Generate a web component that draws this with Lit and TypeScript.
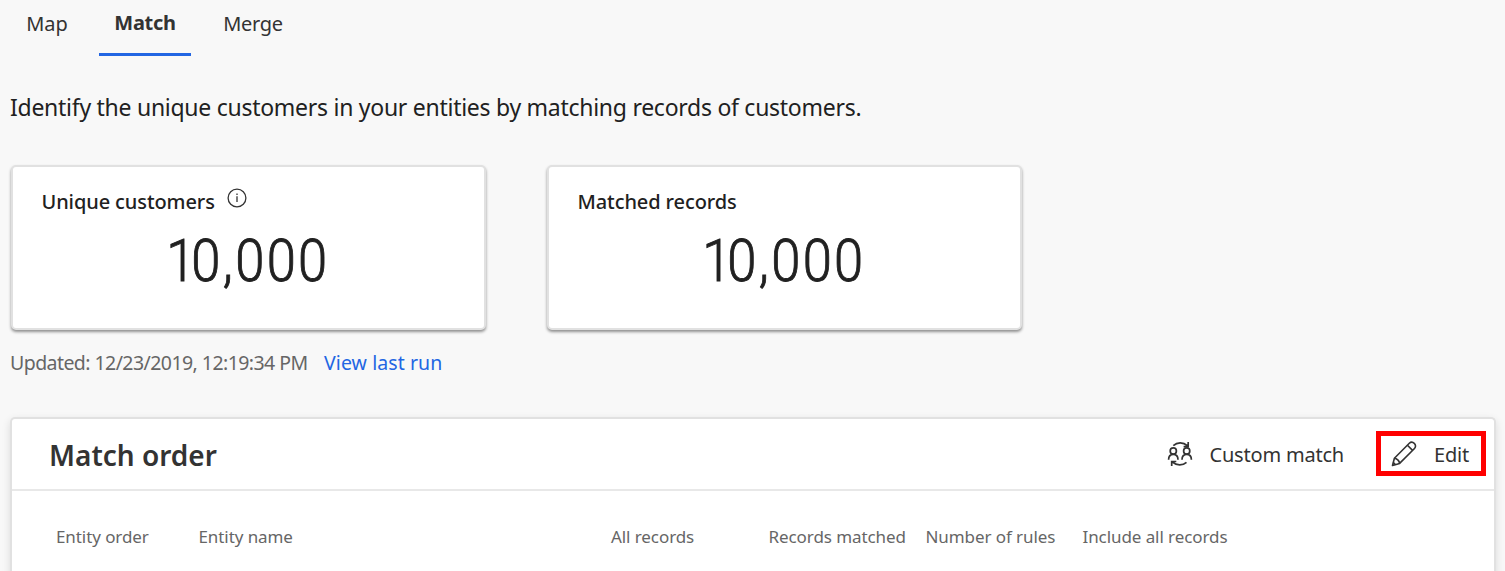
import { LitElement, html, css, svg } from "lit";
import { customElement, property } from "lit/decorators.js";

const infoIcon = svg`<svg class="info" width="20" height="20" viewBox="0 0 20 20" fill="none" stroke="#333" stroke-width="1.3">
  <circle cx="10" cy="10" r="8.9"></circle>
  <path d="M10 8.3V14M10 5.6V7"></path>
</svg>`;

const customMatchIcon = svg`<svg width="26" height="26" viewBox="0 0 26 26" fill="none" stroke="#333" stroke-width="1.7">
  <circle cx="6.3" cy="9.9" r="3.1"></circle>
  <circle cx="19.7" cy="9.9" r="3.1"></circle>
  <path d="M1.6 18.8C1.6 15.4 3.5 13.3 6.3 13.3S11 15.4 11 18.8M15 18.8C15 15.4 16.9 13.3 19.7 13.3S24.4 15.4 24.4 18.8"></path>
  <path d="M6.3 4.6C10.3 0.9 16.2 1 20.4 4.7M21.2 1V5.6H16.6"></path>
  <path d="M19.5 21.4C15.7 24.8 9.6 24.8 5.4 21.2M4.7 25V20.5H9.3"></path>
</svg>`;

const editIcon = svg`<svg width="26" height="26" viewBox="0 0 26 26" fill="none" stroke="#333" stroke-width="1.6" stroke-linejoin="round">
  <path d="M1.5 24.5L3.4 17.2L18.3 2.3C19.7 0.9 21.8 0.9 23.3 2.4C24.9 3.9 24.9 6.1 23.5 7.5L8.6 22.4Z"></path>
  <path d="M16.4 4.2L21.6 9.4M3.4 17.2C5.8 17.4 8.3 19.9 8.6 22.4M2.2 21.4L4.5 23.7"></path>
</svg>`;

@customElement("metric-card")
export class MetricCard extends LitElement {
  @property() label = "";
  @property() value = "";
  @property({ type: Boolean }) info = false;

  static styles = css`
    :host {
      display: block;
      box-sizing: border-box;
      width: 475px;
      height: 165px;
      padding: 20px 28px 0 28.5px;
      background: #fff;
      border: 2px solid #e1e1e1;
      border-radius: 5px;
      box-shadow: 0 2px 3px rgba(0, 0, 0, 0.42);
      color: #212121;
    }
    .head {
      display: flex;
      height: 30px;
      gap: 12px;
      line-height: 30px;
      font-size: 20px;
      font-weight: 500;
      letter-spacing: -0.1px;
      white-space: nowrap;
    }
    .info {
      margin-top: 1px;
    }
    .value {
      height: 72px;
      margin-top: 8px;
      padding-right: 3px;
      text-align: center;
      font: 300 59px/72px Roboto, sans-serif;
      -webkit-text-stroke: 0.9px #212121;
      letter-spacing: 2.6px;
      transform: scaleX(0.89);
    }
    .value::first-letter {
      letter-spacing: -4.6px;
    }
  `;

  render() {
    return html`
      <div class="head"><span>${this.label}</span>${this.info ? infoIcon : ""}</div>
      <div class="value">${this.value}</div>
    `;
  }
}

@customElement("app-root")
export class AppRoot extends LitElement {
  static styles = css`
    :host {
      display: block;
      box-sizing: border-box;
      height: 571px;
      overflow: hidden;
      padding-left: 10px;
      background: #f8f8f8;
      color: #333;
      font-family: "Noto Sans", sans-serif;
      white-space: nowrap;
    }
    .tabs {
      display: flex;
      height: 56px;
      font-size: 20px;
      line-height: 48px;
    }
    .tab {
      box-sizing: border-box;
      height: 56px;
      text-align: center;
    }
    .map { width: 74px; margin-right: 15px; }
    .merge { width: 92px; margin-left: 16px; letter-spacing: -0.3px; }
    .active {
      width: 92px;
      line-height: 46px;
      font-weight: 700;
      letter-spacing: -0.3px;
      border-bottom: 3px solid #2266e3;
    }
    .intro {
      margin-top: 34px;
      height: 34px;
      line-height: 34px;
      font-size: 23px;
      letter-spacing: -0.27px;
      color: #212121;
    }
    .cards {
      display: flex;
      gap: 61px;
      margin: 41px 0 0 1px;
    }
    .status {
      display: flex;
      gap: 16.5px;
      height: 30px;
      margin-top: 18px;
      line-height: 30px;
      font-size: 19.5px;
      letter-spacing: -0.56px;
      color: #666;
    }
    .link { color: #2266e3; letter-spacing: 0.07px; }
    .panel {
      box-sizing: border-box;
      width: 1486px;
      height: 170px;
      margin-top: 39px;
      background: #fff;
      border: 2px solid #e1e1e1;
      border-bottom: 0;
      border-radius: 5px 5px 0 0;
      box-shadow: 0 3px 9px rgba(0, 0, 0, 0.12);
    }
    .bar {
      display: flex;
      align-items: center;
      height: 70px;
      padding: 0 8px 0 37px;
      border-bottom: 2px solid #e8e8e8;
    }
    .title {
      margin-right: auto;
      padding-top: 2px;
      font-size: 28px;
      font-weight: 600;
      line-height: 68px;
    }
    .action {
      display: flex;
      align-items: center;
      font-size: 20px;
      line-height: 30px;
    }
    .action span { padding-top: 2px; }
    .custom { gap: 17px; margin-right: 32px; letter-spacing: -0.2px; }
    .edit {
      box-sizing: border-box;
      width: 110px;
      height: 45px;
      gap: 17px;
      margin-bottom: 2px;
      padding: 2px 0 0 10px;
      border: 5px solid #f00;
      letter-spacing: -0.2px;
    }
    .columns {
      display: grid;
      grid-template-columns: 142.5px 412.5px 157.5px 157px 157px auto;
      padding: 31px 0 0 44px;
      line-height: 30px;
      font-size: 17px;
      letter-spacing: -0.08px;
      color: #666;
    }
  `;

  private columns = [
    "Entity order",
    "Entity name",
    "All records",
    "Records matched",
    "Number of rules",
    "Include all records",
  ];

  render() {
    return html`
      <nav class="tabs">
        <div class="tab map">Map</div>
        <div class="tab active">Match</div>
        <div class="tab merge">Merge</div>
      </nav>
      <div class="intro"><span>Identify the unique customers in your entities by matching records of customers.</span></div>
      <div class="cards">
        <metric-card label="Unique customers" value="10,000" info></metric-card>
        <metric-card label="Matched records" value="10,000"></metric-card>
      </div>
      <div class="status">
        <span>Updated: 12/23/2019, 12:19:34 PM</span>
        <span class="link">View last run</span>
      </div>
      <section class="panel">
        <div class="bar">
          <span class="title">Match order</span>
          <div class="action custom">${customMatchIcon}<span>Custom match</span></div>
          <div class="action edit">${editIcon}<span>Edit</span></div>
        </div>
        <div class="columns">${this.columns.map((c) => html`<span>${c}</span>`)}</div>
      </section>
    `;
  }
}
